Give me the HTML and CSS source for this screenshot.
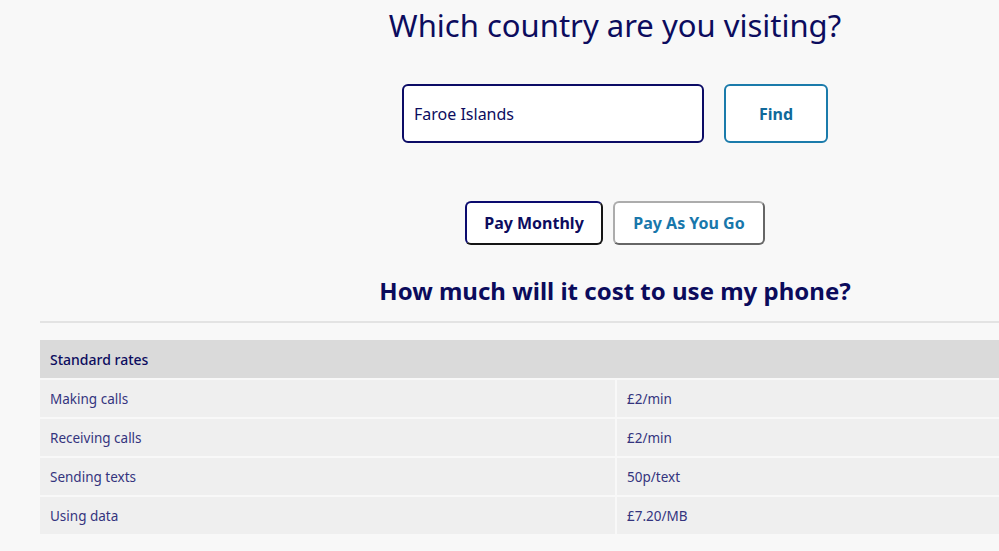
FILE: index.html
```html
<!DOCTYPE html>
<html lang="en">
<head>
<meta charset="utf-8">
<title>Roaming rates</title>
<link rel="stylesheet" href="styles.css">
</head>
<body>
<div class="page">
  <h1 class="title">Which country are you visiting?</h1>
  <form class="search">
    <input class="country" type="text" value="Faroe Islands">
    <button class="find" type="button">Find</button>
  </form>
  <div class="plans">
    <button class="plan plan-active" type="button">Pay Monthly</button>
    <button class="plan plan-other" type="button">Pay As You Go</button>
  </div>
  <h2 class="subtitle">How much will it cost to use my phone?</h2>
  <div class="rule"></div>
  <table class="rates">
    <thead>
      <tr><th colspan="2">Standard rates</th></tr>
    </thead>
    <tbody>
      <tr><td>Making calls</td><td>£2/min</td></tr>
      <tr><td>Receiving calls</td><td>£2/min</td></tr>
      <tr><td>Sending texts</td><td>50p/text</td></tr>
      <tr><td>Using data</td><td>£7.20/MB</td></tr>
    </tbody>
  </table>
</div>
</body>
</html>
```
FILE: styles.css
```css
html, body {
  margin: 0;
  padding: 0;
  background: #f8f8f8;
  overflow: hidden;
}
body {
  font-family: "Noto Sans", "Open Sans", sans-serif;
  color: #0c0c5e;
}
.page {
  width: 1150px;
  margin-left: 40px;
}
.title {
  margin: 0;
  padding-top: 2px;
  text-align: center;
  font-size: 31px;
  font-weight: 400;
  line-height: 46px;
  color: #0c0c5e;
}
.search {
  margin: 36px 0 0;
  display: flex;
  justify-content: center;
  gap: 20px;
}
.country {
  box-sizing: border-box;
  width: 302px;
  height: 59px;
  border: 2px solid #0c0c66;
  border-radius: 6px;
  background: #fff;
  padding: 0 10px;
  font-family: inherit;
  font-size: 16px;
  color: #0c0c5e;
  outline: none;
}
.find {
  box-sizing: border-box;
  width: 104px;
  height: 59px;
  border: 2px solid #1b7bab;
  border-radius: 6px;
  background: #fff;
  font-family: inherit;
  font-size: 16px;
  font-weight: 700;
  color: #10699a;
}
.plans {
  margin-top: 58px;
  display: flex;
  justify-content: center;
  gap: 10px;
}
.plan {
  box-sizing: border-box;
  height: 44px;
  border-radius: 6px;
  background: #fff;
  font-family: inherit;
  font-size: 16px;
  font-weight: 700;
  border-width: 2px;
  border-style: solid;
}
.plan-active {
  width: 138px;
  color: #0c0c5e;
  border-color: #0b0b6e #151515 #151515 #0b0b6e;
}
.plan-other {
  width: 152px;
  color: #1877ab;
  border-color: #acacac #666 #666 #acacac;
}
.subtitle {
  margin: 29px 0 0;
  text-align: center;
  font-size: 24px;
  font-weight: 700;
  line-height: 34px;
  color: #0b0b5c;
}
.rule {
  margin-top: 13px;
  height: 2px;
  background: #e3e3e3;
}
.rates {
  margin-top: 17px;
  width: 100%;
  border-collapse: separate;
  border-spacing: 0;
  font-size: 13.5px;
}
.rates th {
  background: #dadada;
  height: 38px;
  padding: 0 10px;
  text-align: left;
  font-size: 14px;
  font-weight: 500;
  color: #0c0c5e;
  border-bottom: 2px solid #f8f8f8;
}
.rates td {
  background: #efefef;
  height: 37px;
  padding: 0 10px;
  color: #34347e;
  border-bottom: 2px solid #f8f8f8;
}
.rates td:first-child {
  width: 555px;
  border-right: 2px solid #f8f8f8;
}
```
